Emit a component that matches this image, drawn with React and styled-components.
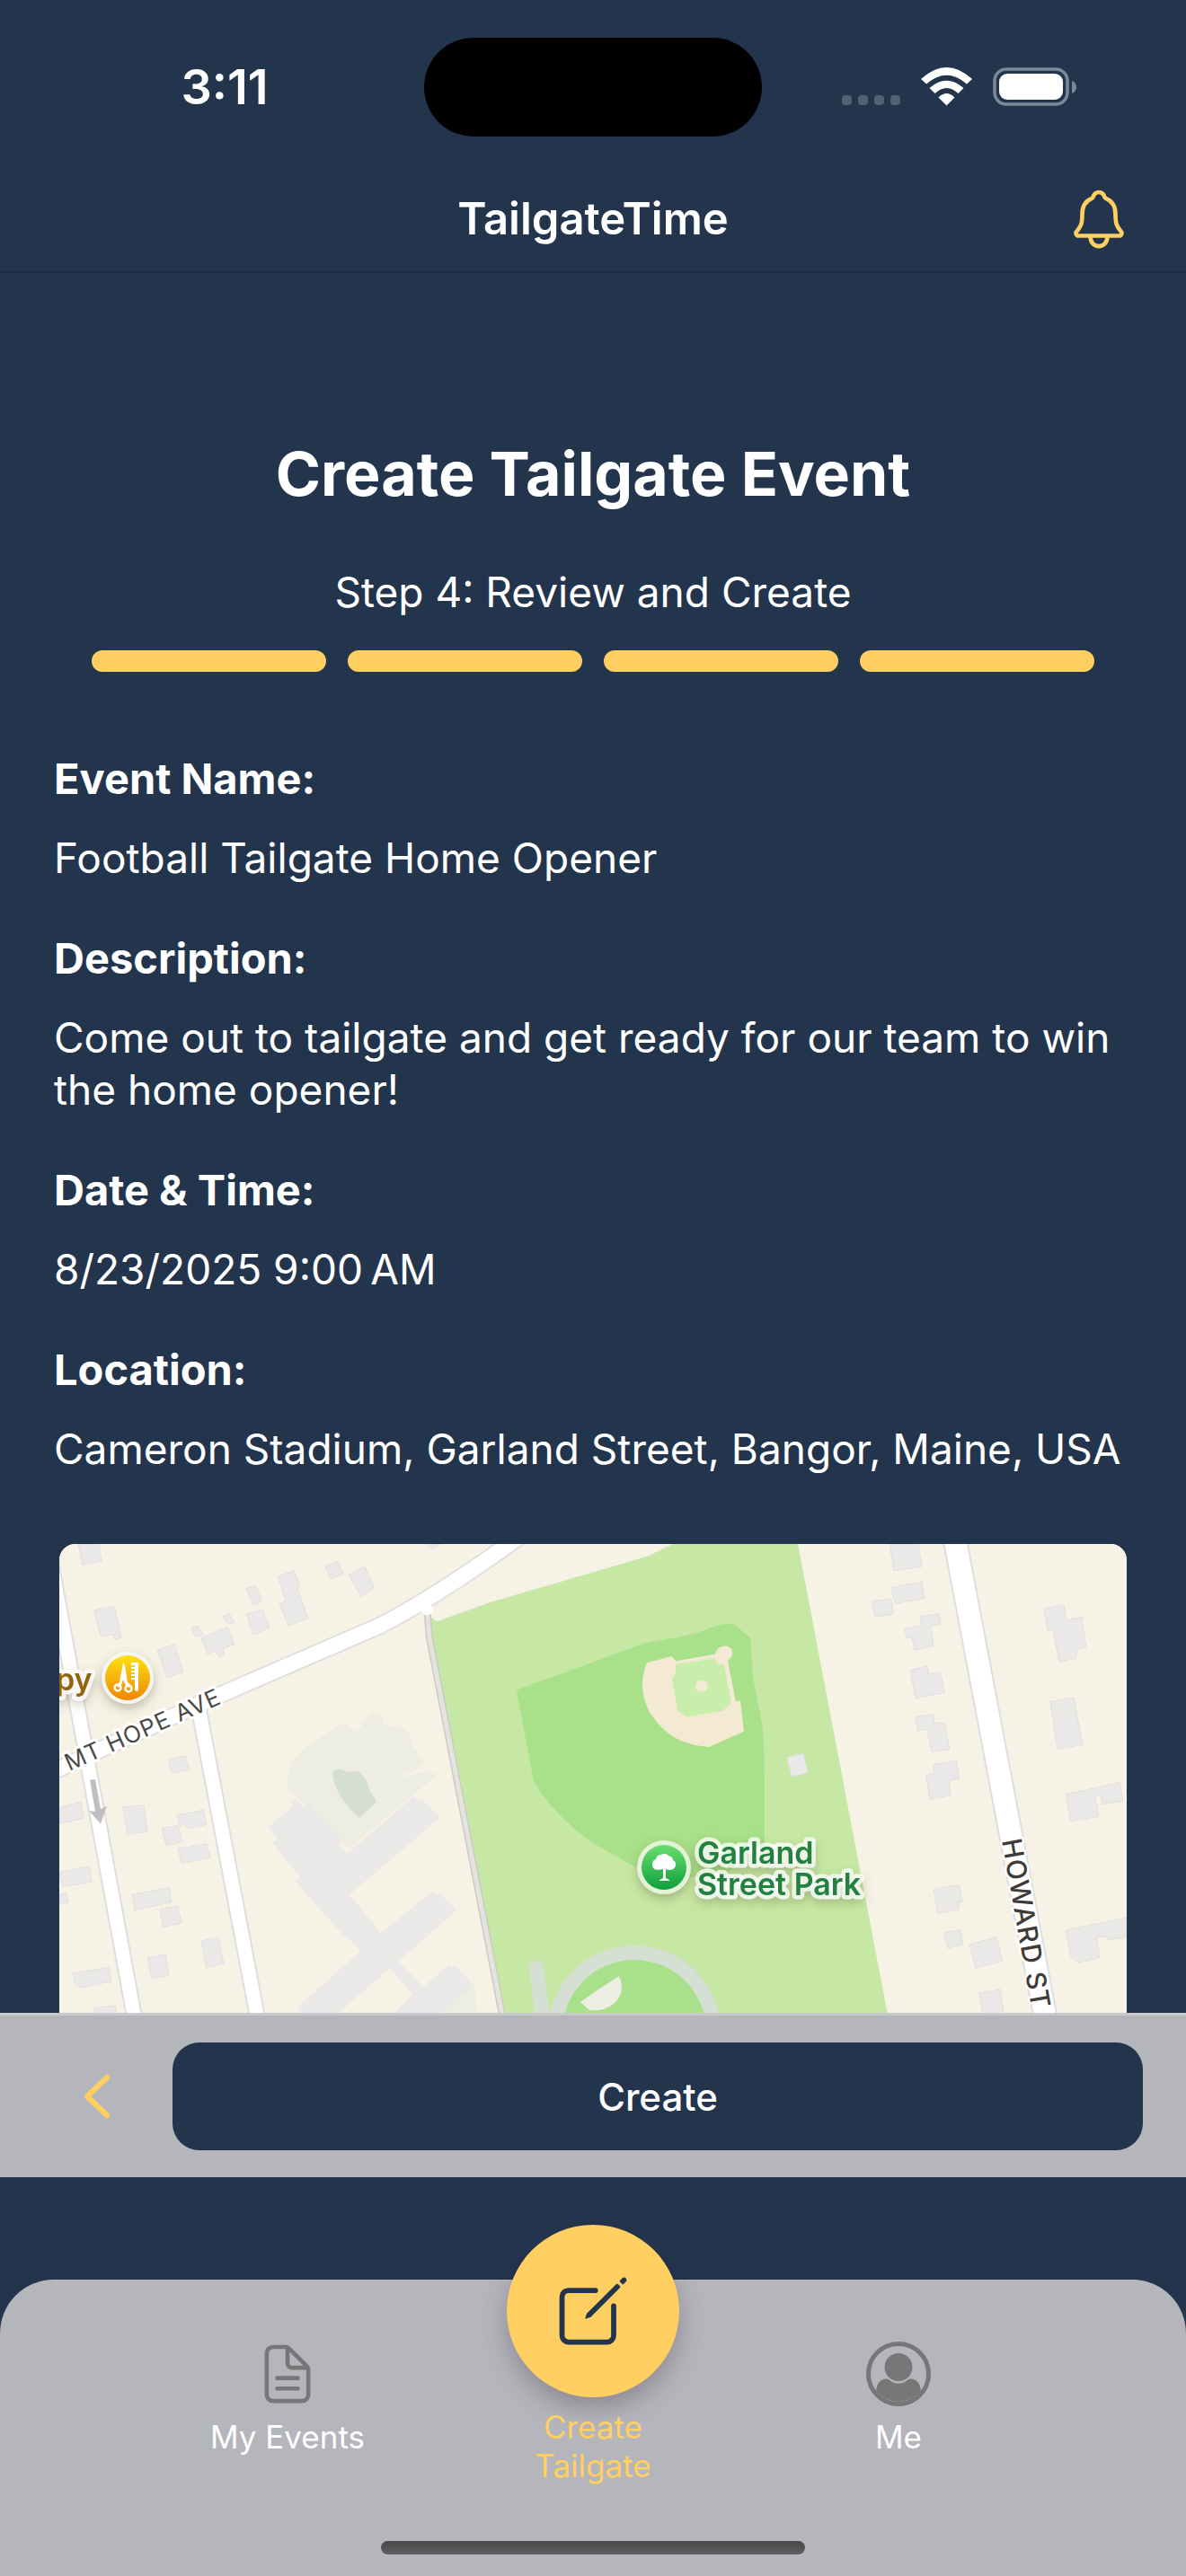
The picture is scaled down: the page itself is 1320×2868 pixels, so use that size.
import React from 'react';
import styled, { createGlobalStyle } from 'styled-components';
import { IoNotificationsOutline, IoCreateOutline, IoDocumentTextOutline } from 'react-icons/io5';

const navy = '#22354d';
const gold = '#ffcf62';
const grey = '#b5b6bc';

const GlobalStyle = createGlobalStyle`
  * { box-sizing: border-box; }
  body {
    margin: 0;
    background: ${navy};
    color: #fff;
    font-family: Inter, Roboto, "Liberation Sans", sans-serif;
  }
  h1, h2, p, dl, dt, dd { margin: 0; }
  button { font-family: inherit; border: 0; cursor: pointer; }
`;

const Screen = styled.div`
  display: flex;
  flex-direction: column;
  height: 100vh;
  overflow: hidden;
`;

const Header = styled.header`
  flex: none;
  border-bottom: 2px solid #1c2d41;
`;

const StatusBar = styled.div`
  display: grid;
  grid-template-columns: 1fr 376px 1fr;
  align-items: center;
  padding: 42px 0 34px;
`;

const Clock = styled.time`
  justify-self: center;
  padding-left: 28px;
  font-size: 54px;
  line-height: 64px;
  font-weight: 600;
`;

const Island = styled.div`
  height: 110px;
  border-radius: 55px;
  background: #000;
`;

const StatusIcons = styled.svg`
  justify-self: center;
  width: 264px;
  height: 48px;
  margin-right: 32px;
`;

const TitleBar = styled.div`
  display: grid;
  grid-template-columns: 1fr auto 1fr;
  align-items: center;
  height: 116px;
  padding: 0 60px;
`;

const AppName = styled.h1`
  grid-column: 2;
  font-size: 49px;
  line-height: 60px;
  font-weight: 600;
`;

const IconButton = styled.button`
  display: flex;
  justify-self: end;
  padding: 0;
  background: none;
  color: ${gold};
  font-size: 74px;
`;

const Content = styled.main`
  flex: 1;
  min-height: 0;
  overflow: hidden;
  padding: 178px 60px 0;
`;

const Title = styled.h2`
  font-size: 68px;
  line-height: 90px;
  font-weight: 700;
  text-align: center;
`;

const StepLabel = styled.p`
  margin-top: 58px;
  font-size: 46px;
  line-height: 58px;
  text-align: center;
`;

const Progress = styled.div`
  display: flex;
  gap: 24px;
  margin-top: 36px;
  padding: 0 42px;
`;

const Segment = styled.span`
  flex: 1;
  height: 24px;
  border-radius: 12px;
  background: ${gold};
`;

const Details = styled.dl`
  display: grid;
  gap: 54px;
  margin-top: 90px;
`;

const Label = styled.dt`
  font-size: 47px;
  line-height: 58px;
  font-weight: 700;
`;

const Value = styled.dd`
  margin-top: 30px;
  font-size: 46px;
  line-height: 58px;
`;

const MapCard = styled.div`
  height: 600px;
  margin: 77px 6px 0;
  border-radius: 18px;
  overflow: hidden;
  background: #f6f2e6;

  svg { display: block; width: 100%; height: 100%; }
`;

const ActionBar = styled.div`
  flex: none;
  display: flex;
  align-items: center;
  gap: 48px;
  padding: 30px 48px 30px 72px;
  border-top: 3px solid #c9c9cb;
  background: ${grey};
`;

const BackButton = styled(IconButton)`
  width: 72px;
  justify-content: center;

  svg { width: 34px; height: 52px; }
`;

const CreateButton = styled.button`
  flex: 1;
  height: 120px;
  border-radius: 30px;
  background: ${navy};
  color: #fff;
  font-size: 42px;
  font-weight: 500;
`;

const TabBar = styled.nav`
  flex: none;
  display: flex;
  flex-direction: column;
  align-items: center;
  height: 330px;
  margin-top: 114px;
  border-radius: 60px 60px 0 0;
  background: ${grey};
`;

const Tabs = styled.div`
  flex: 1;
  display: grid;
  grid-template-columns: 300px 1fr 300px;
  width: 100%;
  padding: 0 170px;
`;

const Tab = styled.a`
  display: flex;
  flex-direction: column;
  align-items: center;
  padding-top: 60px;
  color: #fff;
  font-size: 35px;
  line-height: 43px;
  text-align: center;
  text-decoration: none;
`;

const TabIcon = styled.span`
  display: flex;
  align-items: center;
  height: 90px;
  margin-bottom: 4px;
  color: #777;
  font-size: ${({ $size }) => $size}px;
`;

const CreateTab = styled(Tab)`
  padding-top: 0;
  color: ${gold};
`;

const CreateBadge = styled.span`
  display: flex;
  align-items: center;
  justify-content: center;
  width: 192px;
  height: 192px;
  margin: -61px 0 12px;
  border-radius: 50%;
  background: ${gold};
  color: ${navy};
  font-size: 92px;
  box-shadow: 0 12px 28px rgba(60, 40, 60, 0.32);
`;

const HomeIndicator = styled.div`
  width: 472px;
  height: 15px;
  margin-bottom: 24px;
  border-radius: 8px;
  background: linear-gradient(#474747, #606060);
`;

const buildings = [
  '21,0 44,0 47,21 26,26', '39,82 61,77 69,116 62,118 60,112 46,114',
  '109,131 128,124 138,158 120,165', '158,116 187,103 195,124 182,129 183,137 178,140 174,132 165,136',
  '147,104 154,101 160,112 152,115', '182,90 189,86 195,97 188,99', '208,55 219,51 225,71 216,76',
  '208,87 226,81 234,104 216,112', '243,40 261,33 268,52 265,56 277,92 255,101 245,74 252,70',
  '296,27 310,22 316,37 302,43', '322,38 340,28 350,52 348,56 336,65',
  '121,267 140,262 145,279 125,284', '71,326 94,323 98,356 76,359', '131,336 160,329 164,347 143,352 139,347 134,349',
  '114,352 132,348 137,368 119,373', '132,377 164,371 168,388 136,395', '0,326 24,319 27,339 0,346',
  '0,406 33,399 36,418 4,424', '0,434 8,431 10,443 0,446', '81,434 122,425 125,443 84,453',
  '112,452 132,448 136,469 115,474', '98,512 118,508 122,534 103,537', '158,491 177,487 183,519 164,524',
  '15,531 55,524 58,541 24,549 18,544', '39,574 62,571 66,600 42,600', '408,0 424,0 416,7',
  '924,0 956,0 960,28 929,33', '926,54 960,47 963,67 930,74', '905,71 926,68 928,87 908,90',
  '958,90 979,86 981,99 970,101 973,126 952,131 949,116 943,116 941,105 960,101',
  '947,156 966,151 968,161 981,159 985,184 953,191', '953,214 973,210 974,221 985,222 991,254 971,257 966,229 956,231',
  '973,273 998,268 1002,290 990,293 992,311 969,316 965,286 974,283',
  '1096,80 1118,75 1121,94 1140,90 1138,96 1143,127 1132,131 1132,141 1113,146 1106,107 1100,107',
  '1103,195 1129,190 1139,248 1111,254', '1120,310 1180,295 1184,318 1161,322 1159,311 1153,312 1157,337 1126,343',
  '1120,478 1188,462 1188,486 1167,490 1166,485 1154,487 1158,512 1134,518 1126,511',
  '973,427 1002,422 1005,443 1001,443 1001,452 978,457', '985,481 1003,477 1006,495 989,500',
  '1013,496 1043,486 1050,516 1020,525', '1024,556 1047,551 1054,600 1022,600 1027,578',
  '810,264 828,259 833,283 815,288',
];

const school = '233,350 260,324 257,320 262,315 272,325 276,320 315,367 311,372 320,383 395,312 401,318 403,315 424,338 323,434 358,481 415,430 419,434 423,432 442,453 378,516 405,548 433,521 437,525 441,522 461,546 405,600 355,600 393,557 368,525 290,600 272,585 265,573 335,504 324,490 320,489 262,417 268,412 237,370 243,365';

function StreetMap() {
  return (
    <svg viewBox="0 0 1188 600" preserveAspectRatio="xMidYMin slice" role="img" aria-label="Map of Garland Street Park">
      <defs>
        <linearGradient id="salon" x2="0" y2="1"><stop stopColor="#ffe114" /><stop offset="1" stopColor="#f08600" /></linearGradient>
        <linearGradient id="park" x2="0" y2="1"><stop stopColor="#68df70" /><stop offset="1" stopColor="#0e9e3c" /></linearGradient>
        <filter id="soft" x="-40%" y="-40%" width="180%" height="180%"><feDropShadow dx="0" dy="5" stdDeviation="6" floodColor="#553" floodOpacity=".35" /></filter>
      </defs>
      <rect width="1188" height="600" fill="#f6f2e6" />
      <g transform="scale(1 .9)">
        <path d="M411 88 420 96 480 72 594 35 655 15 683 0H822L925 600H498L409 110Z" fill="#c7e8a4" />
        <path d="M509 182Q511 179 520 176L594 146 650 123 690 115 710 110Q740 95 752 100L769 116 772 165 782 222Q785 250 785 300V372L745 405Q690 422 640 399L594 370Q550 335 528 294Z" fill="#a9e08a" />
        <path d="m654 147 28-8 4 6 44-9q2-10 12-10 9 2 7 12l-5 7 9 50 5-1 4 38-39 19q-44-2-67-45-13-30-2-59Z" fill="#f4ead4" />
        <path d="m686 149 43-8 4 7 7 1 8 48-9 9-41 8-10-8-6-39 4-8Z" fill="#c9eeac" />
        <circle cx="715" cy="176" r="7" fill="#f4ead4" />
        <path d="M253 300Q252 270 280 246L316 221 330 232Q337 230 337 225 346 202 360 215L361 225Q392 222 393 248 400 262 406 268 403 280 384 283L384 289 411 280 420 286 323 376 311 367Z" fill="#edede2" />
        <path d="M304 281Q311 276 320 282L332 281Q344 290 345 304L353 319 334 339Q305 310 304 281Z" fill="#d5ded1" />
        <g fill="#eae9e7" stroke="#dfdedb">
          {buildings.map((points) => <polygon key={points} points={points} />)}
        </g>
        <polygon points={school} fill="#eae9e7" />
        <path d="M461 538 467 600H405L461 546Z" fill="#edede2" />
        <g fill="none">
          <path d="M409 78 412 116 496 600" stroke="#cbcbc2" strokeWidth="8" />
          <path d="M409 78 412 116 496 600" stroke="#e4e4df" strokeWidth="5" />
          <g stroke="#dedfdd" strokeWidth="19">
            <path d="M-13 0 86 600M155 202 223 600" />
            <path d="M-20 288 174 189 357 101Q420 65 512-9" strokeWidth="22" />
            <path d="M996-10 1100 600" strokeWidth="28" />
          </g>
          <g stroke="#fff" strokeWidth="15">
            <path d="M-13 0 86 600M155 202 223 600" />
            <path d="M-20 288 174 189 357 101Q420 65 512-9" strokeWidth="18" />
            <path d="M996-10 1100 600" strokeWidth="24" />
          </g>
        </g>
        <circle cx="409" cy="81" r="7" fill="#fff" />
        <path d="M34 292l6-1 6 37 7-4-7 22-13-16 7 1Z" fill="#bfbfbf" />
      </g>
      <path d="M530 465 541 550" stroke="#d6dfd3" strokeWidth="16" />
      <circle cx="640" cy="543" r="88" fill="#a9e08a" stroke="#d6dfd3" strokeWidth="16" />
      <path d="M580 510 594 500 623 481Q631 500 617 512 605 521 590 519Z" fill="#edede4" />
      <g fontFamily="Inter, Roboto, sans-serif" stroke="#fff" strokeLinejoin="round" paintOrder="stroke">
        <text transform="translate(11 253) rotate(-24)" fontSize="26" letterSpacing="1" strokeWidth="6" fill="#4b4946">MT HOPE AVE</text>
        <text transform="translate(1049 330) rotate(80)" fontSize="30" fontWeight="500" letterSpacing="1" strokeWidth="5" fill="#3f3b38">HOWARD ST</text>
        <g fontSize="34" fontWeight="600" strokeWidth="9" strokeOpacity=".75" filter="url(#soft)">
          <text x="-4" y="163" fill="#916410">py</text>
          <text x="710" y="356" fill="#20803f">Garland</text>
          <text x="710" y="391" fill="#20803f">Street Park</text>
        </g>
      </g>
      <g filter="url(#soft)">
        <circle cx="76" cy="149" r="29" fill="#f8f6f0" />
        <circle cx="76" cy="149" r="25" fill="url(#salon)" />
        <circle cx="673" cy="360" r="30" fill="#e4f2d8" />
        <circle cx="673" cy="360" r="25" fill="url(#park)" />
      </g>
      <path d="M80 133q0-1 1-1h6q1 0 1 1v29q0 2-2 2t-2-2v-11h-4v-2h4v-2h-4v-2h4v-2h-4v-2h4v-2h-4v-2h4v-2h-4ZM71 132q1 0 2 4l3 18 4 3-2 3-5-4-2-5-2 6-4 3-1-3 3-3Z" fill="#fff" />
      <g fill="none" stroke="#fff" strokeWidth="2.5"><circle cx="65" cy="160" r="3.5" /><circle cx="77" cy="161" r="3.5" /></g>
      <path d="M668 375v-1l4-2v-10q-12 3-12-5 0-5 4-6 1-5 6-5 4-3 8 1 5 1 5 5 4 2 3 6-2 7-11 4v10l4 2v1Z" fill="#fff" />
    </svg>
  );
}

function PersonIcon() {
  return (
    <svg viewBox="0 0 72 72" width="1em" height="1em" fill="currentColor" aria-hidden="true">
      <circle cx="36" cy="36" r="33.5" fill="none" stroke="currentColor" strokeWidth="5" />
      <circle cx="36" cy="28.500" r="15.500" />
      <path d="M11 55Q12 45 18 42.500 23 40.500 26 43 36 50.500 46 43 49 40.500 54 42.500 60 45 61 55A32 32 0 0 1 11 55Z" />
    </svg>
  );
}

const details = [
  ['Event Name:', 'Football Tailgate Home Opener'],
  ['Description:', 'Come out to tailgate and get ready for our team to win the home opener!'],
  ['Date & Time:', '8/23/2025 9:00\u2009AM'],
  ['Location:', 'Cameron Stadium, Garland Street, Bangor, Maine, USA'],
];

export default function App() {
  return (
    <Screen>
      <GlobalStyle />
      <Header>
        <StatusBar>
          <Clock>3:11</Clock>
          <Island />
          <StatusIcons viewBox="0 0 264 48" aria-hidden="true">
            <g fill="#536174">
              <rect x="1" y="33" width="11" height="11" rx="4" /><rect x="19" y="33" width="11" height="11" rx="4" />
              <rect x="37" y="33" width="11" height="11" rx="4" /><rect x="55" y="33" width="11" height="11" rx="4" />
            </g>
            <g fill="#fff">
              <path d="M89 15Q117.500-11 146 15L140 20.500Q117.500 1 95 20.500Z" />
              <path d="M98.500 25Q117.500 8.500 136.500 25L130.500 31Q117.500 19 104.500 31Z" />
              <path d="M108.500 35.500Q117.500 26.500 126.500 35.500L117.500 44.500Z" />
            </g>
            <rect x="171" y="4" width="81" height="39" rx="13" fill="none" stroke="#7c8897" strokeWidth="3.500" />
            <rect x="176" y="9" width="71" height="29" rx="9" fill="#fff" />
            <path d="M257 17q5 2 5 7t-5 7Z" fill="#7c8897" />
          </StatusIcons>
        </StatusBar>
        <TitleBar>
          <AppName>TailgateTime</AppName>
          <IconButton type="button" aria-label="Notifications"><IoNotificationsOutline /></IconButton>
        </TitleBar>
      </Header>
      <Content>
        <Title>Create Tailgate Event</Title>
        <StepLabel>Step 4: Review and Create</StepLabel>
        <Progress>
          <Segment /><Segment /><Segment /><Segment />
        </Progress>
        <Details>
          {details.map(([label, value]) => (
            <div key={label}>
              <Label>{label}</Label>
              <Value>{value}</Value>
            </div>
          ))}
        </Details>
        <MapCard><StreetMap /></MapCard>
      </Content>
      <ActionBar>
        <BackButton type="button" aria-label="Back">
          <svg viewBox="0 0 34 52" fill="none" stroke="currentColor" strokeWidth="6" strokeLinecap="round" strokeLinejoin="round"><path d="M28 5 6 26l22 21" /></svg>
        </BackButton>
        <CreateButton type="button">Create</CreateButton>
      </ActionBar>
      <TabBar>
        <Tabs>
          <Tab href="#events"><TabIcon $size={74}><IoDocumentTextOutline /></TabIcon>My Events</Tab>
          <CreateTab href="#create">
            <CreateBadge><IoCreateOutline /></CreateBadge>
            Create<br />Tailgate
          </CreateTab>
          <Tab href="#me"><TabIcon $size={72}><PersonIcon /></TabIcon>Me</Tab>
        </Tabs>
        <HomeIndicator />
      </TabBar>
    </Screen>
  );
}
